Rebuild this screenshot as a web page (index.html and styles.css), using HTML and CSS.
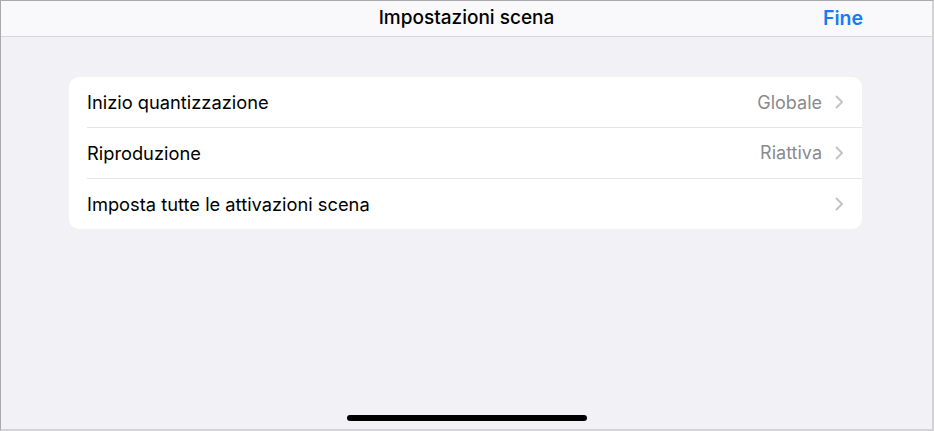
FILE: index.html
```html
<!DOCTYPE html>
<html lang="it">
<head>
<meta charset="utf-8">
<title>Impostazioni scena</title>
<link rel="stylesheet" href="styles.css">
</head>
<body>
<div class="screen">
  <header class="navbar">
    <span class="nav-side"></span>
    <h1 class="nav-title">Impostazioni scena</h1>
    <button class="nav-done">Fine</button>
  </header>
  <main class="content">
    <ul class="group">
      <li class="row">
        <span class="row-label">Inizio quantizzazione</span>
        <span class="row-value">Globale</span>
        <svg class="chevron" width="9" height="14" viewBox="0 0 9 14"><path d="M1.5 1.5 L7 7 L1.5 12.5" fill="none" stroke="#c4c4c7" stroke-width="2" stroke-linecap="round" stroke-linejoin="round"/></svg>
      </li>
      <li class="row">
        <span class="row-label">Riproduzione</span>
        <span class="row-value">Riattiva</span>
        <svg class="chevron" width="9" height="14" viewBox="0 0 9 14"><path d="M1.5 1.5 L7 7 L1.5 12.5" fill="none" stroke="#c4c4c7" stroke-width="2" stroke-linecap="round" stroke-linejoin="round"/></svg>
      </li>
      <li class="row">
        <span class="row-label">Imposta tutte le attivazioni scena</span>
        <span class="row-value"></span>
        <svg class="chevron" width="9" height="14" viewBox="0 0 9 14"><path d="M1.5 1.5 L7 7 L1.5 12.5" fill="none" stroke="#c4c4c7" stroke-width="2" stroke-linecap="round" stroke-linejoin="round"/></svg>
      </li>
    </ul>
  </main>
  <div class="home-indicator"></div>
</div>
</body>
</html>
```
FILE: styles.css
```css
* { box-sizing: border-box; }
html, body { margin: 0; padding: 0; }
body {
  font-family: Inter, "Noto Sans", "Liberation Sans", sans-serif;
  background: #f2f1f6;
}
.screen {
  width: 934px;
  height: 431px;
  display: flex;
  flex-direction: column;
  background: #f2f1f6;
  border-top: 1px solid #a9a9ab;
  border-left: 1px solid #a9a9ab;
  border-right: 2px solid #d3d3d5;
  border-bottom: 2px solid #d3d3d5;
}
.navbar {
  height: 36px;
  flex: none;
  display: grid;
  grid-template-columns: 1fr auto 1fr;
  align-items: center;
  padding: 0 69px 2px 69px;
  background: #f9f9fb;
  border-bottom: 1px solid #d8d8db;
}
.nav-title {
  margin: 0;
  font-size: 19px;
  font-weight: 500;
  color: #000;
  letter-spacing: 0;
}
.nav-done {
  justify-self: end;
  border: 0;
  background: none;
  padding: 0;
  font: inherit;
  font-size: 19.5px;
  font-weight: 600;
  color: #157cf6;
}
.content {
  padding: 40px 70px 0 68px;
}
.group {
  list-style: none;
  margin: 0;
  padding: 0;
  background: #fff;
  border-radius: 10px;
  overflow: hidden;
}
.row {
  height: 50px;
  display: flex;
  align-items: center;
  padding-left: 18px;
  position: relative;
}
.row + .row {
  height: 51px;
}
.row + .row::before {
  content: "";
  position: absolute;
  top: 0;
  left: 18px;
  right: 0;
  border-top: 1px solid #e6e6ea;
}
.row-label {
  flex: 1;
  font-size: 18.3px;
  color: #000;
}
.row-value {
  font-size: 18px;
  color: #8a8a8e;
  margin-right: 13px;
}
.chevron {
  flex: none;
  margin-right: 18px;
}
.home-indicator {
  margin: auto auto 8px;
  width: 240px;
  height: 6px;
  border-radius: 3px;
  background: #000;
}
```
